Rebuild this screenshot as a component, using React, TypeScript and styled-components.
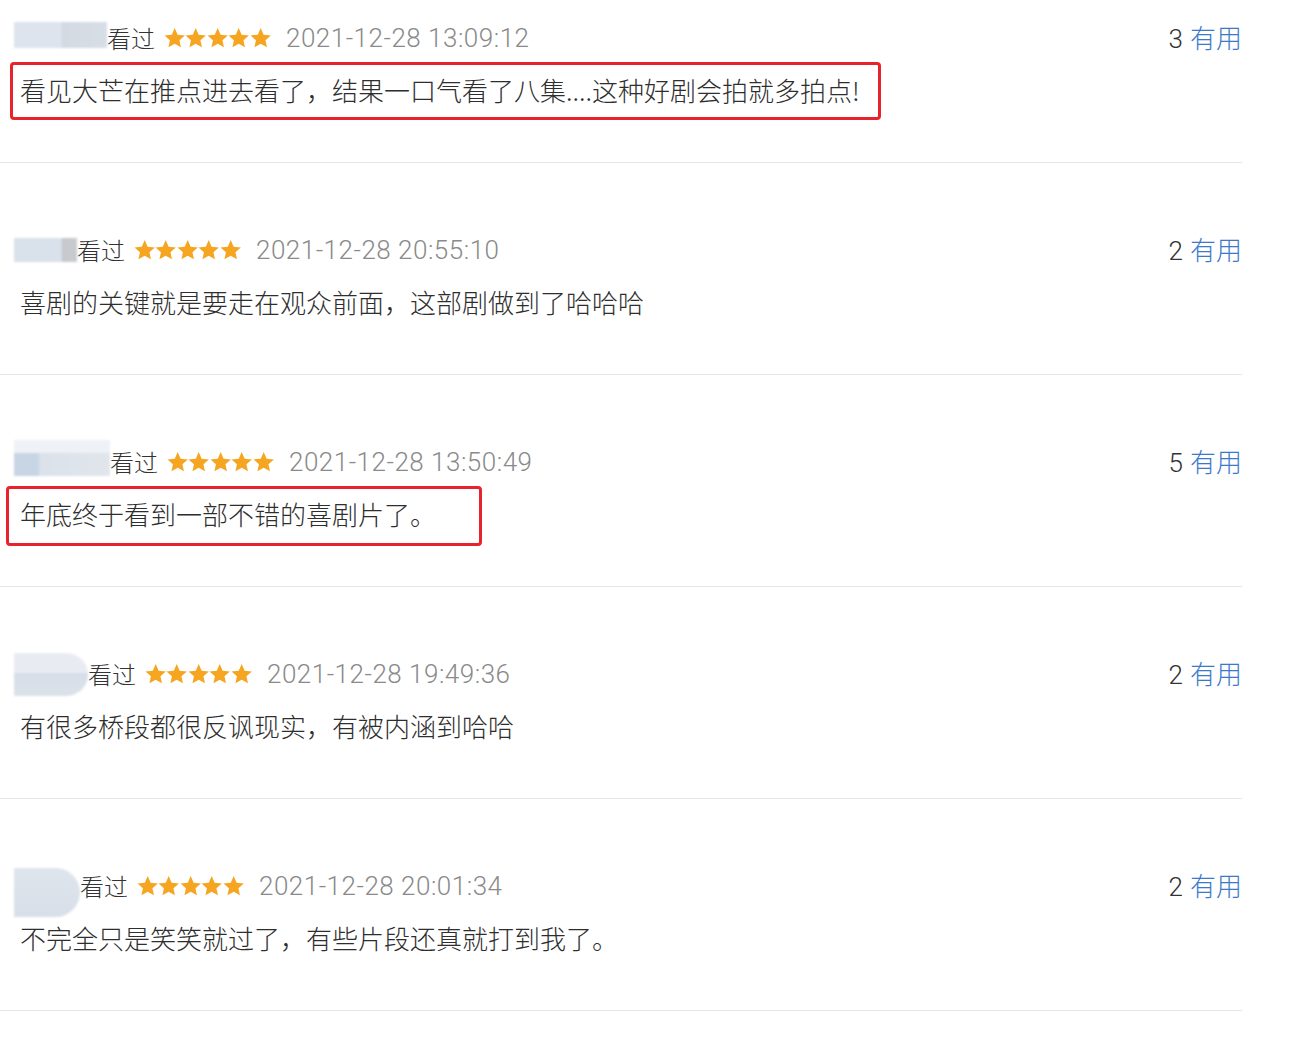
import React from "react";
import styled, { createGlobalStyle } from "styled-components";

const GlobalStyle = createGlobalStyle`
  html, body { margin: 0; padding: 0; background: #ffffff; }
  body { font-family: "Noto Sans CJK SC", "Noto Sans", sans-serif; }
`;

const Page = styled.div`
  width: 1312px;
  height: 1046px;
  overflow: hidden;
  background: #ffffff;
`;

const List = styled.div`
  width: 1242px;
  display: flex;
  flex-direction: column;
`;

const Row = styled.div<{ $first?: boolean }>`
  display: flex;
  flex-direction: column;
  padding-top: ${(p) => (p.$first ? 20 : 69)}px;
  padding-bottom: 54px;
  border-bottom: 1px solid #e6e6e6;
`;

const Header = styled.div`
  height: 36px;
  display: flex;
  align-items: center;
`;

const Meta = styled.div`
  flex: 1;
  display: flex;
  align-items: center;
  padding-left: 14px;
  height: 36px;
`;

const Blur = styled.div<{ $w: number; $h: number; $dy: number; $round?: boolean; $bg: string }>`
  width: ${(p) => p.$w}px;
  height: ${(p) => p.$h}px;
  flex: none;
  transform: translateY(${(p) => p.$dy}px);
  background: ${(p) => p.$bg};
  border-radius: ${(p) => (p.$round ? `0 ${p.$h / 2}px ${p.$h / 2}px 0` : "0")};
  filter: blur(1px);
`;

const Seen = styled.span`
  font-size: 24px;
  font-weight: 300;
  color: #333;
  line-height: 36px;
  margin-right: 9px;
`;

const Stars = styled.div`
  display: flex;
  align-items: center;
  margin-right: 15px;
`;

const DateText = styled.span`
  font-family: "Roboto", "Noto Sans", sans-serif;
  font-weight: 300;
  font-size: 26px;
  letter-spacing: 0.5px;
  color: #8a8a8a;
  line-height: 36px;
`;

const Useful = styled.div`
  font-size: 26px;
  font-weight: 300;
  line-height: 36px;
  color: #333;
  white-space: nowrap;
`;

const Count = styled.span`
  font-family: "Roboto", "Noto Sans", sans-serif;
  font-weight: 300;
  margin-right: 7px;
`;

const UsefulLink = styled.span`
  color: #3d79c9;
`;

const Body = styled.div`
  margin-top: 16px;
  padding-left: 20px;
  height: 36px;
  display: flex;
  align-items: center;
`;

const Comment = styled.span`
  position: relative;
  font-size: 26px;
  font-weight: 300;
  line-height: 36px;
  color: #2e2e2e;
  white-space: nowrap;
`;

const Marker = styled.span<{ $l: number; $r: number; $t: number; $b: number }>`
  position: absolute;
  left: ${(p) => -p.$l}px;
  right: ${(p) => -p.$r}px;
  top: ${(p) => -p.$t}px;
  bottom: ${(p) => -p.$b}px;
  border: 3.5px solid #e8232b;
  border-radius: 4px;
  pointer-events: none;
`;

const Star = () => (
  <svg width="21.4" height="22" viewBox="0 0 24 24">
    <path
      d="M12 0.8L15.29 8.27L23.41 9.09L17.33 14.53L19.05 22.51L12 18.4L4.95 22.51L6.67 14.53L0.59 9.09L8.71 8.27Z"
      fill="#f6a521"
    />
  </svg>
);

type Review = {
  blur: { w: number; h: number; dy: number; round?: boolean; bg: string };
  date: string;
  count: number;
  text: string;
  mark?: { l: number; r: number; t: number; b: number };
};

const reviews: Review[] = [
  {
    blur: {
      w: 93,
      h: 26,
      dy: -3,
      bg: "linear-gradient(90deg, #dde4ee 0%, #dde4ee 50%, #d3dae3 52%, #d8dee6 100%)",
    },
    date: "2021-12-28 13:09:12",
    count: 3,
    text: "看见大芒在推点进去看了，结果一口气看了八集....这种好剧会拍就多拍点!",
    mark: { l: 10, r: 21, t: 10, b: 12 },
  },
  {
    blur: {
      w: 63,
      h: 24,
      dy: 0,
      bg: "linear-gradient(90deg, #d9e1ea 0%, #d9e1ea 75%, #c6c8cd 77%, #c9cbd0 100%)",
    },
    date: "2021-12-28 20:55:10",
    count: 2,
    text: "喜剧的关键就是要走在观众前面，这部剧做到了哈哈哈",
  },
  {
    blur: {
      w: 96,
      h: 36,
      dy: -4,
      bg: "linear-gradient(180deg, #eef1f5 0%, #eef1f5 35%, transparent 36%), linear-gradient(90deg, #c8d5e5 0%, #c8d5e5 25%, #dbe2eb 27%, #e1e6ec 100%)",
    },
    date: "2021-12-28 13:50:49",
    count: 5,
    text: "年底终于看到一部不错的喜剧片了。",
    mark: { l: 14, r: 46, t: 10, b: 14 },
  },
  {
    blur: {
      w: 74,
      h: 43,
      dy: 0,
      round: true,
      bg: "linear-gradient(180deg, #e8ecf2 0%, #e8ecf2 45%, #d6dee8 47%, #dbe2ea 100%)",
    },
    date: "2021-12-28 19:49:36",
    count: 2,
    text: "有很多桥段都很反讽现实，有被内涵到哈哈",
  },
  {
    blur: {
      w: 66,
      h: 49,
      dy: 6,
      round: true,
      bg: "linear-gradient(180deg, #dfe5ed 0%, #d8dfe8 100%)",
    },
    date: "2021-12-28 20:01:34",
    count: 2,
    text: "不完全只是笑笑就过了，有些片段还真就打到我了。",
  },
];

export default function App() {
  return (
    <Page>
      <GlobalStyle />
      <List>
        {reviews.map((r, i) => (
          <Row key={i} $first={i === 0}>
            <Header>
              <Meta>
                <Blur
                  $w={r.blur.w}
                  $h={r.blur.h}
                  $dy={r.blur.dy}
                  $round={r.blur.round}
                  $bg={r.blur.bg}
                />
                <Seen>看过</Seen>
                <Stars>
                  <Star />
                  <Star />
                  <Star />
                  <Star />
                  <Star />
                </Stars>
                <DateText>{r.date}</DateText>
              </Meta>
              <Useful>
                <Count>{r.count}</Count>
                <UsefulLink>有用</UsefulLink>
              </Useful>
            </Header>
            <Body>
              <Comment>
                {r.text}
                {r.mark && <Marker $l={r.mark.l} $r={r.mark.r} $t={r.mark.t} $b={r.mark.b} />}
              </Comment>
            </Body>
          </Row>
        ))}
      </List>
    </Page>
  );
}
